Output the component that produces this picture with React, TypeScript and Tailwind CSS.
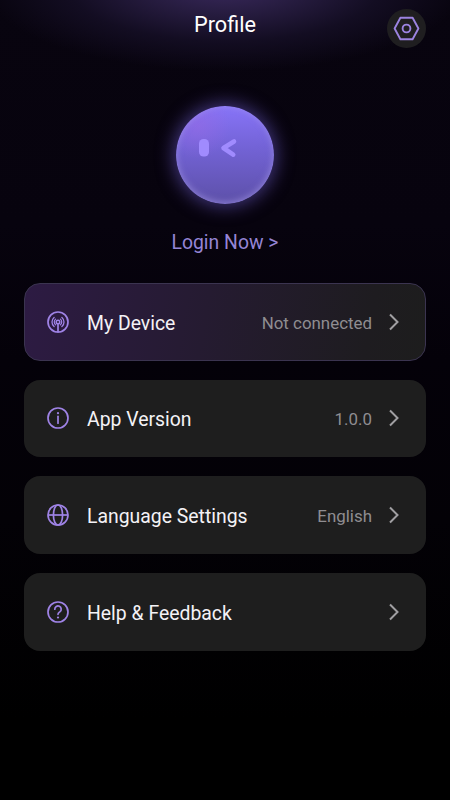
import React from 'react'

const DeviceIcon = () => (
  <svg width="24" height="24" viewBox="0 0 24 24" fill="none" stroke="currentColor" strokeWidth="1.7" strokeLinecap="round">
    <circle cx="12" cy="12" r="10" />
    <circle cx="12" cy="12" r="1.8" strokeWidth="1.5" />
    <path d="M12 14v8" />
    <path d="M9.6 14.9a3.8 3.8 0 0 1 0-5.8M14.4 14.9a3.8 3.8 0 0 0 0-5.8" strokeWidth="1.2" />
    <path d="M8.1 16.6a6.1 6.1 0 0 1 0-9.2M15.9 16.6a6.1 6.1 0 0 0 0-9.2" strokeWidth="1.3" />
  </svg>
)

const InfoIcon = () => (
  <svg width="24" height="24" viewBox="0 0 24 24" fill="none" stroke="currentColor" strokeWidth="1.7" strokeLinecap="round">
    <circle cx="12" cy="12" r="10" />
    <path d="M12 10.3v6.9" />
    <circle cx="12" cy="7.2" r="1.1" fill="currentColor" stroke="none" />
  </svg>
)

const GlobeIcon = () => (
  <svg width="24" height="24" viewBox="0 0 24 24" fill="none" stroke="currentColor" strokeWidth="1.7">
    <circle cx="12" cy="12" r="10" />
    <ellipse cx="12" cy="12" rx="4.6" ry="10" />
    <path d="M2 12h20" />
  </svg>
)

const HelpIcon = () => (
  <svg width="24" height="24" viewBox="0 0 24 24" fill="none" stroke="currentColor" strokeWidth="1.7" strokeLinecap="round" strokeLinejoin="round">
    <circle cx="12" cy="12" r="10" />
    <path d="M8.8 9.2a3.2 3.2 0 1 1 5.2 2.5c-1.1.8-2 1.3-2 2.6" />
    <circle cx="12" cy="17.5" r="1.1" fill="currentColor" stroke="none" />
  </svg>
)

const items = [
  { label: 'My Device', value: 'Not connected', icon: <DeviceIcon />, active: true },
  { label: 'App Version', value: '1.0.0', icon: <InfoIcon /> },
  { label: 'Language Settings', value: 'English', icon: <GlobeIcon /> },
  { label: 'Help & Feedback', value: '', icon: <HelpIcon /> },
]

export default function App() {
  return (
    <div className="h-[800px] w-[450px] overflow-hidden bg-[radial-gradient(ellipse_240px_85px_at_50%_-14px,#3a295e_0%,#281d42_30%,#130d22_65%,transparent_100%),linear-gradient(180deg,#08040f_0%,#07030e_28%,#040109_45%,#030106_65%,#000000_90%)] font-['Roboto',sans-serif]">
      {/* Header */}
      <div className="grid h-14 grid-cols-[1fr_auto_1fr] items-start pr-6">
        <h1 className="col-start-2 ml-6 pt-[9px] text-[21.7px] leading-8 text-white">Profile</h1>
        <button className="mt-[9px] flex size-[39px] items-center justify-center justify-self-end rounded-full bg-[#1f1e20] text-[#9c83e0]">
          <svg width="27" height="25" viewBox="0 0 27 25" fill="none" stroke="currentColor" strokeWidth="1.9" strokeLinejoin="round">
            <path d="M7.4 1.7h12.2l5.8 10.8-5.8 10.8H7.4L1.6 12.5z" />
            <circle cx="13.5" cy="12.5" r="3.9" />
          </svg>
        </button>
      </div>

      {/* Avatar */}
      <div className="mt-[50px] flex flex-col items-center">
        <div className="size-[98px] rounded-full bg-[radial-gradient(circle_at_22%_20%,#9a6ae480_0%,transparent_30%),linear-gradient(180deg,#8874f8_0%,#7363d6_42%,#5d50a8_100%)] shadow-[0_0_17px_3px_#6a58c890,inset_0_-1px_6px_1px_#a99bea90]">
          <svg width="98" height="98" viewBox="0 0 98 98" fill="none">
            <rect x="23" y="33" width="10" height="17.5" rx="4.6" fill="#a08bfe" />
            <path d="M58 35.5L47.5 42l9.7 6.6" stroke="#a08bfe" strokeWidth="4.6" strokeLinecap="round" strokeLinejoin="round" />
          </svg>
        </div>
        <a className="mt-[25px] text-[19.4px] leading-7 text-[#9585d6]">Login Now &gt;</a>
      </div>

      {/* Menu */}
      <div className="mt-[26px] flex flex-col gap-[19.2px] px-6">
        {items.map((item) => (
          <div
            key={item.label}
            className={`flex h-[77.5px] items-center rounded-[16px] border pl-[21px] pr-[24px] ${item.active
              ? 'border-[#3b3450] bg-[linear-gradient(100deg,#2d1b43_0%,#251b31_45%,#1e1c20_85%,#1d1d1d_100%)]'
              : 'border-transparent bg-[#1e1e1e] bg-clip-border'
            }`}
          >
            <span className="text-[#9f83e6]">{item.icon}</span>
            <span className="ml-[17px] flex-1 pt-[3px] text-[19.4px] text-[#f4f2f6]">{item.label}</span>
            <span className="pt-[3px] text-[16.9px] text-[#8f8d91]">{item.value}</span>
            <svg className="ml-[15px]" width="14" height="20" viewBox="0 0 14 20" fill="none" stroke="#a09fa2" strokeWidth="2">
              <path d="M3 2.5l7.5 7.5L3 17.5" />
            </svg>
          </div>
        ))}
      </div>
    </div>
  )
}
